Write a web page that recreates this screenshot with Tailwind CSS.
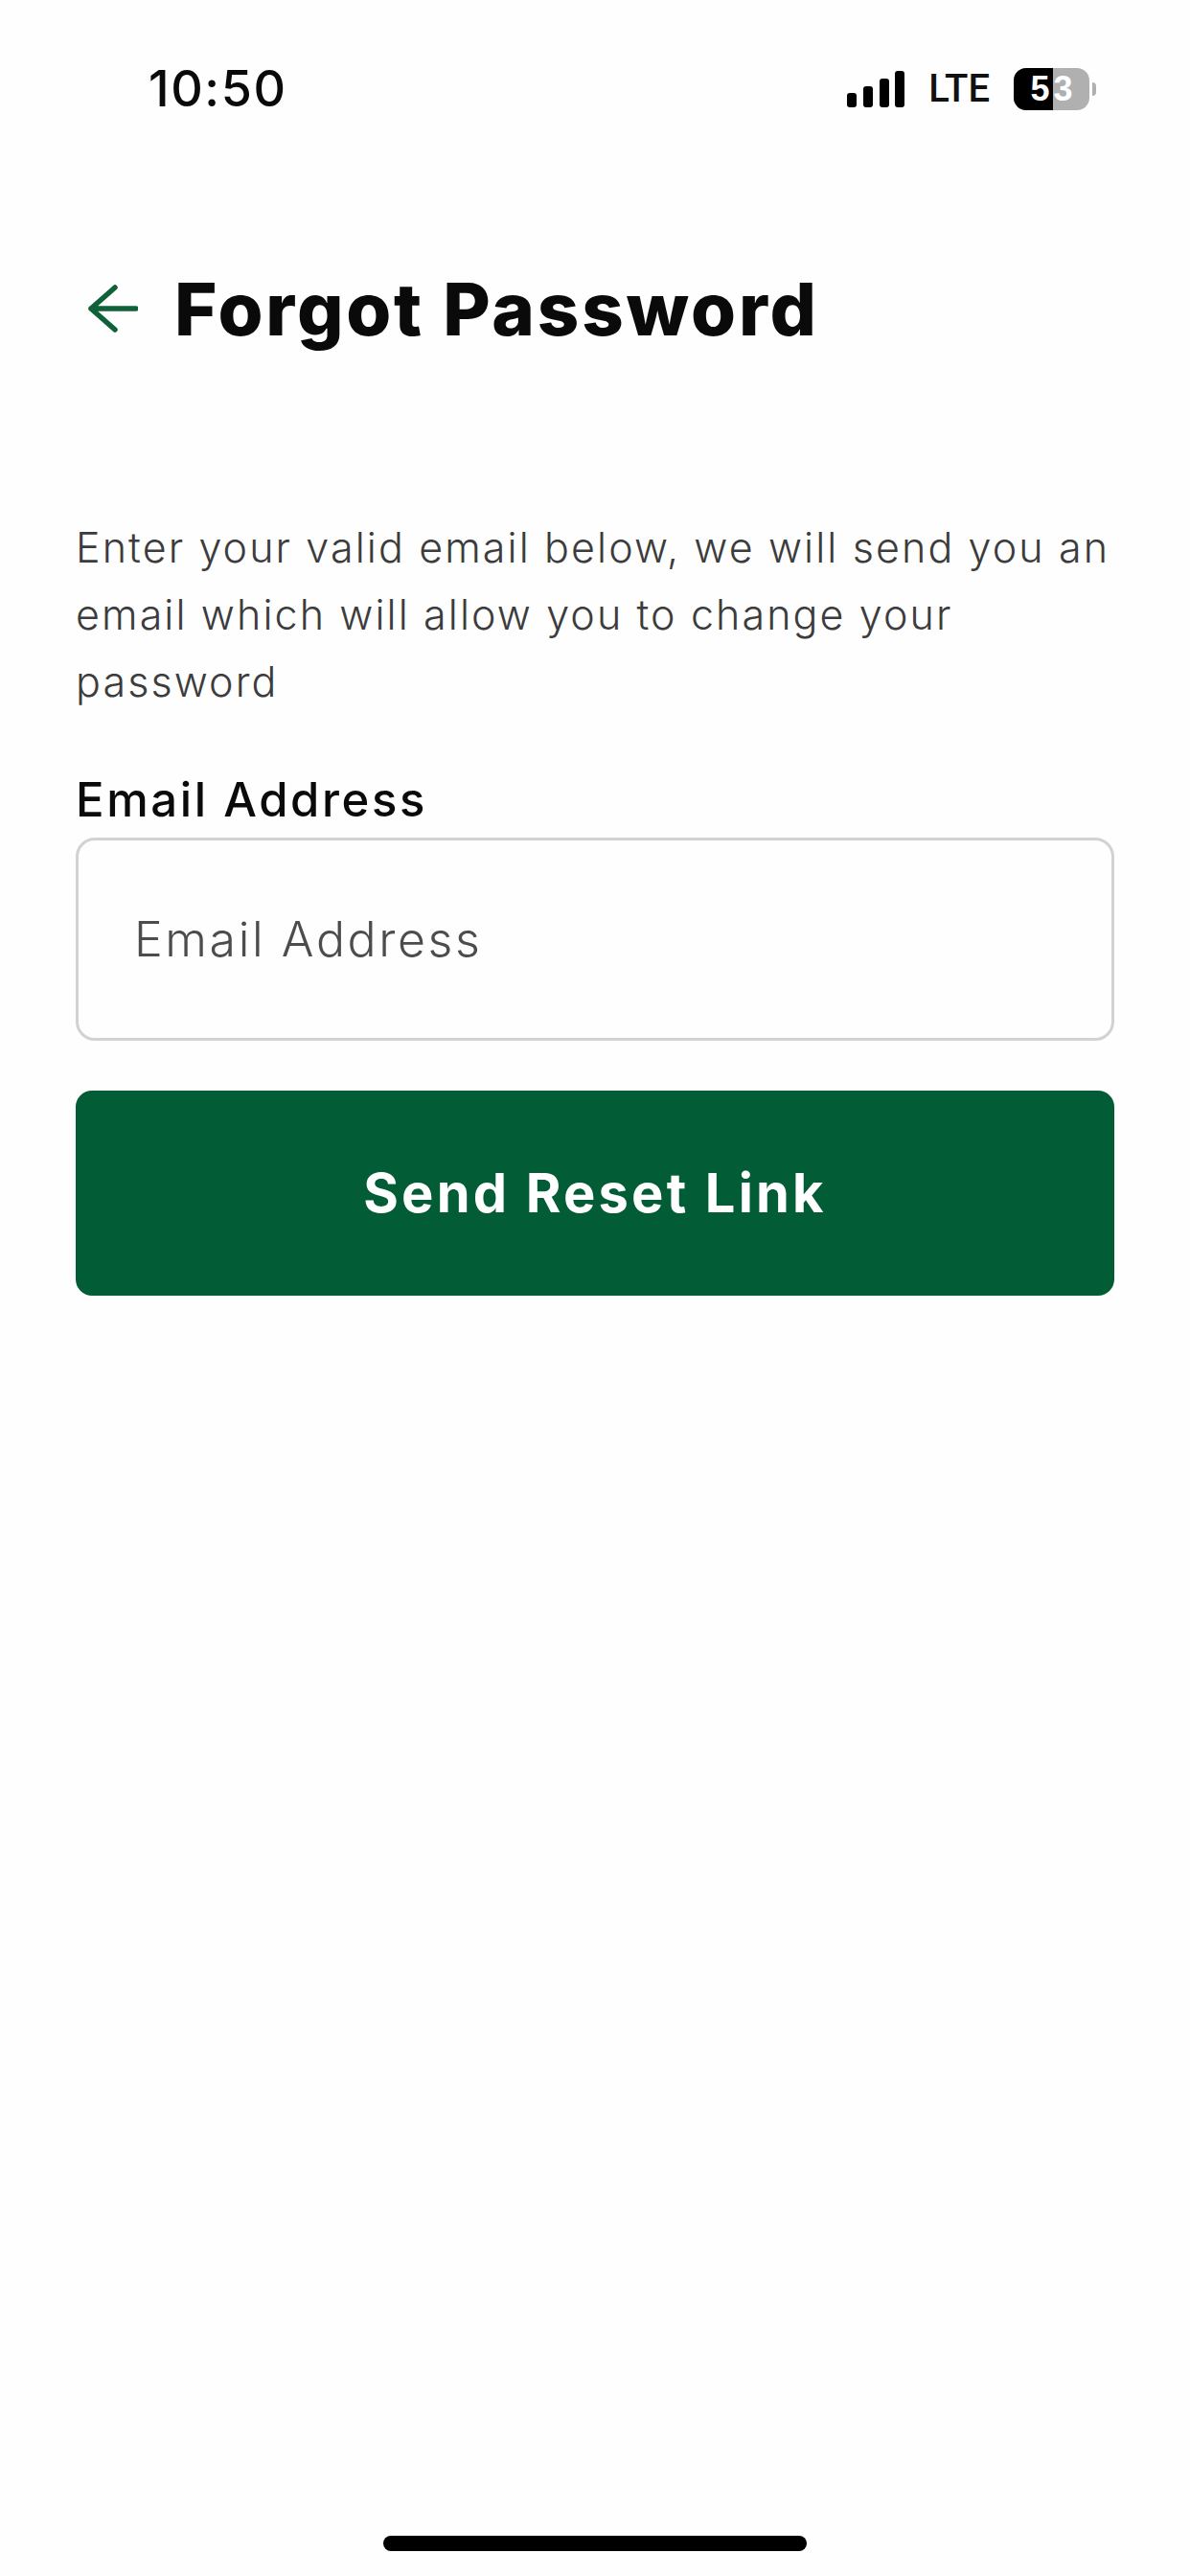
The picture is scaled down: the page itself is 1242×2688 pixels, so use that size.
<!DOCTYPE html>
<html><head><meta charset="utf-8"><script src="https://cdn.jsdelivr.net/npm/@tailwindcss/browser@4"></script></head>
<body class="bg-white">
<div class="w-[1242px] h-[2688px] bg-[#fefefe] flex flex-col font-['Inter',sans-serif] overflow-hidden">
  <div class="h-[190px] flex justify-between items-start pl-[155px] pr-[98px] pt-[62px] shrink-0">
    <span class="text-[52px] leading-[62px] font-medium text-[#0a0a0a] tracking-[1.6px]">10:50</span>
    <div class="flex items-center h-[62px]">
      <svg class="mr-[25px]" width="60" height="40" viewBox="0 0 60 40" fill="#000"><rect x="0" y="24" width="10" height="15" rx="3"/><rect x="17" y="17" width="10" height="22" rx="3"/><rect x="34" y="9" width="10" height="30" rx="3"/><rect x="50" y="1" width="10" height="38" rx="3"/></svg>
      <span class="mr-[25px] text-[40px] leading-[62px] font-medium text-[#111] font-['Roboto',sans-serif]">LTE</span>
      <div class="relative flex items-center">
        <div class="relative w-[79px] h-[44px] rounded-[13px] overflow-hidden bg-[#b0b0b0] flex items-center justify-center">
          <div class="absolute left-0 top-0 bottom-0 w-[41px] bg-black"></div>
          <span class="relative text-[36px] leading-none font-semibold text-white tracking-[4px] pl-[4px] font-['Liberation_Sans',sans-serif]">53</span>
        </div>
        <div class="w-[4px] h-[14px] ml-[3px] bg-[#b0b0b0] rounded-r-full"></div>
      </div>
    </div>
  </div>
  <div class="flex items-center gap-[38px] pl-[92px] mt-[80px] h-[104px] shrink-0">
    <svg width="52" height="50" viewBox="0 0 52 50" fill="none" stroke="#0f6138" stroke-width="5.5" stroke-linecap="round" stroke-linejoin="round"><path d="M28 3L3 25L28 47M3 25H50"/></svg>
    <h1 class="text-[76px] leading-[104px] font-extrabold text-[#0a0a0a] tracking-[2.8px]">Forgot Password</h1>
  </div>
  <div class="px-[79px] flex flex-col">
    <p class="mt-[162px] text-[43px] leading-[70px] font-[350] text-[#3c3c3c] tracking-[2.1px] w-[1100px]">Enter your valid email below, we will send you an<br>email which will allow you to change your<br>password</p>
    <label class="mt-[54px] text-[49px] leading-[70px] font-medium text-[#0a0a0a] tracking-[2.6px]">Email Address</label>
    <div class="mt-[4px] h-[212px] border-[3px] border-[#d2d2d2] rounded-[20px] flex items-center pl-[58px] text-[50px] font-light text-[#4c4c4c] tracking-[2.6px]">Email Address</div>
    <button class="mt-[52px] h-[214px] rounded-[17px] bg-[#025c35] text-white text-[56px] font-bold tracking-[3.2px]">Send Reset Link</button>
  </div>
  <div class="mt-auto mb-[26px] mx-auto w-[442px] h-[16px] rounded-full bg-black"></div>
</div>
</body></html>
